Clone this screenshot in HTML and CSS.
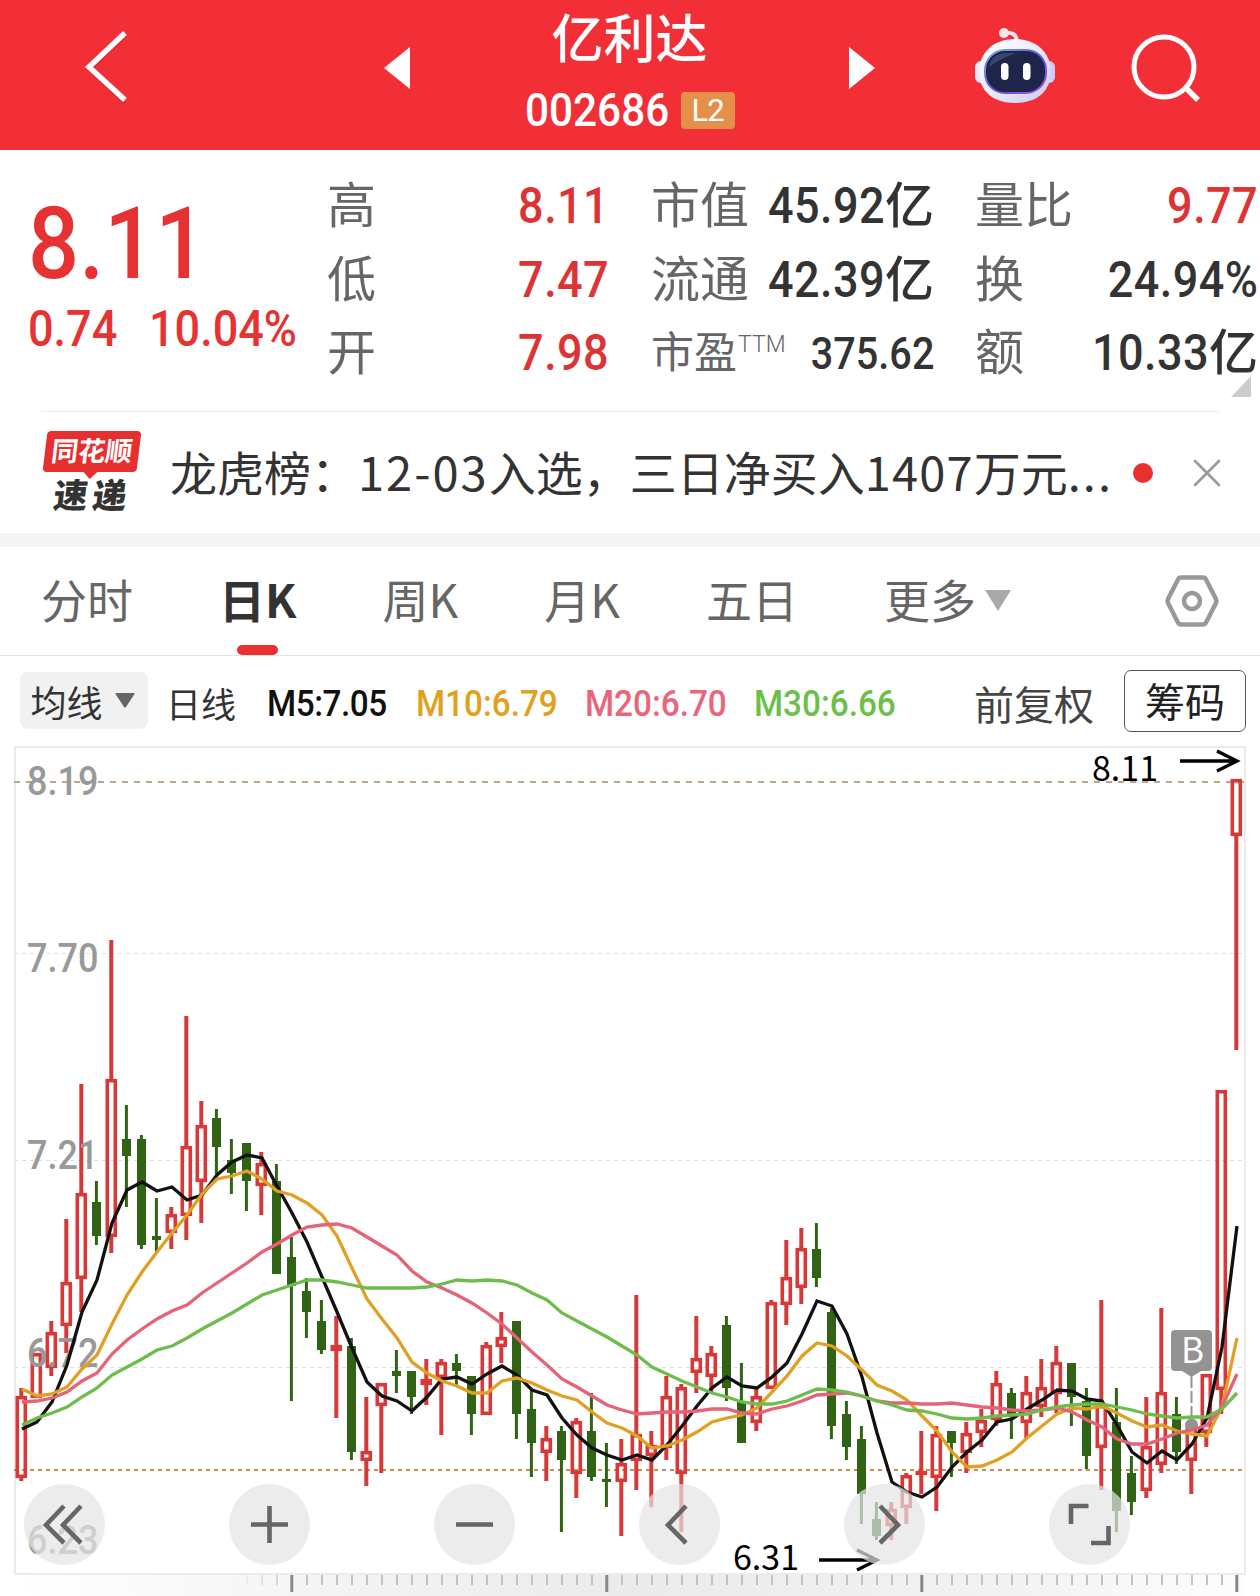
FILE: index.html
```html
<!DOCTYPE html>
<html lang="zh-CN">
<head>
  <meta charset="UTF-8" />
  <meta name="viewport" content="width=device-width, initial-scale=1.0"/>
  <title>亿利达 002686</title>
  <link rel="stylesheet" href="styles.css">
</head>
<body>
  <header class="header">
    <svg class="back" width="50" height="80" viewBox="0 0 50 80">
      <path d="M43 9 L8 43 L43 76" fill="none" stroke="#b5252b" stroke-width="5" opacity="0.5"/>
      <path d="M43 7 L7 41 L43 74" fill="none" stroke="#fff" stroke-width="5.5"/>
    </svg>
    <svg class="prev" width="26" height="42" viewBox="0 0 26 42"><path d="M26 0 V42 L0 21 Z" fill="#fff"/></svg>
    <div class="title">
      <div class="stock-name">亿利达</div>
      <div class="stock-code"><span class="code">002686</span><span class="level">L2</span></div>
    </div>
    <svg class="next" width="26" height="42" viewBox="0 0 26 42"><path d="M0 0 L26 21 L0 42 Z" fill="#fff"/></svg>
    <svg class="robot" width="84" height="78" viewBox="0 0 84 78">
      <defs>
        <linearGradient id="shell" x1="0" y1="0" x2="1" y2="1">
          <stop offset="0" stop-color="#fff"/><stop offset="0.5" stop-color="#ecebfb"/><stop offset="1" stop-color="#c9c8ef"/>
        </linearGradient>
        <linearGradient id="rim" x1="0" y1="0" x2="1" y2="1">
          <stop offset="0" stop-color="#7fb5e8"/><stop offset="0.5" stop-color="#5a55d8"/><stop offset="1" stop-color="#a050e0"/>
        </linearGradient>
      </defs>
      <path d="M31 6 Q43 4 44 14" fill="none" stroke="#e9dff2" stroke-width="4"/>
      <circle cx="31" cy="6" r="5" fill="#f3e6f2"/>
      <rect x="2" y="34" width="12" height="22" rx="6" fill="#e6e6fb"/>
      <rect x="70" y="34" width="12" height="22" rx="6" fill="#cfcdf3"/>
      <path d="M42 12 C62 12 77 24 78 44 C78 64 64 76 42 76 C20 76 6 64 6 44 C7 24 22 12 42 12 Z" fill="url(#shell)"/>
      <rect x="12" y="23" width="61" height="43" rx="20" fill="#1d2648" stroke="url(#rim)" stroke-width="2"/>
      <path d="M16 40 Q18 27 32 26 L44 26 Q30 30 16 40 Z" fill="#47527a" opacity="0.7"/>
      <rect x="28" y="36" width="7.500" height="17" rx="3.700" fill="#fff"/>
      <rect x="50" y="36" width="7.500" height="17" rx="3.700" fill="#fff"/>
    </svg>
    <svg class="search" width="72" height="72" viewBox="0 0 72 72">
      <circle cx="34" cy="35" r="30" fill="none" stroke="#fff" stroke-width="5"/>
      <path d="M56 56 L68 68" stroke="#fff" stroke-width="5.500"/>
    </svg>
  </header>

  <section class="quote">
    <div class="price">
      <div class="last">8.11</div>
      <div class="change"><span>0.74</span><span>10.04%</span></div>
    </div>
    <dl class="stats stats-range">
      <div><dt>高</dt><dd class="up"><span>8.11</span></dd></div>
      <div><dt>低</dt><dd class="up"><span>7.47</span></dd></div>
      <div><dt>开</dt><dd class="up"><span>7.98</span></dd></div>
    </dl>
    <dl class="stats stats-value">
      <div><dt>市值</dt><dd><span>45.92</span><b>亿</b></dd></div>
      <div><dt>流通</dt><dd><span>42.39</span><b>亿</b></dd></div>
      <div class="pe"><dt>市盈<sup>TTM</sup></dt><dd><span>375.62</span></dd></div>
    </dl>
    <dl class="stats stats-volume">
      <div><dt>量比</dt><dd class="up"><span>9.77</span></dd></div>
      <div><dt>换</dt><dd><span>24.94%</span></dd></div>
      <div><dt>额</dt><dd><span>10.33</span><b>亿</b></dd></div>
    </dl>
    <i class="expand"></i>
  </section>

  <section class="notice">
    <div class="logo">
      <div class="logo-top">同花顺</div>
      <div class="logo-bottom">速递</div>
    </div>
    <p class="notice-text">龙虎榜：<span class="date">12-03</span>入选，三日净买入<span class="amount">1407</span>万元<span class="dots">...</span></p>
    <i class="dot"></i>
    <svg class="close" width="28" height="28" viewBox="0 0 28 28"><path d="M2 2 L26 26 M26 2 L2 26" stroke="#999" stroke-width="2.600" stroke-linecap="round"/></svg>
  </section>

  <nav class="tabs">
    <a class="tab">分时</a>
    <a class="tab active">日K</a>
    <a class="tab">周K</a>
    <a class="tab">月K</a>
    <a class="tab">五日</a>
    <a class="tab more">更多<svg width="26" height="21" viewBox="0 0 26 21"><path d="M0 0 H26 L13 21 Z" fill="#a9a9a9"/></svg></a>
    <svg class="setting" width="56" height="54" viewBox="0 0 56 54">
      <path d="M17 3.500 H39 Q41 3.500 42 5.500 L52 25 Q53 27 52 29 L42 48.500 Q41 50.500 39 50.500 H17 Q15 50.500 14 48.500 L4 29 Q3 27 4 25 L14 5.500 Q15 3.500 17 3.500 Z" fill="none" stroke="#999" stroke-width="4.500"/>
      <circle cx="28" cy="27" r="8" fill="none" stroke="#999" stroke-width="4.500"/>
    </svg>
  </nav>

  <div class="toolbar">
    <button class="ma-select">均线<svg width="20" height="15" viewBox="0 0 20 15"><path d="M1 0 H19 Q20 0 19.500 1 L11 14 Q10 15 9 14 L0.500 1 Q0 0 1 0 Z" fill="#666"/></svg></button>
    <span class="period">日线</span>
    <span class="ma ma5">M5:7.05</span>
    <span class="ma ma10">M10:6.79</span>
    <span class="ma ma20">M20:6.70</span>
    <span class="ma ma30">M30:6.66</span>
    <span class="adjust">前复权</span>
    <button class="chips">筹码</button>
  </div>

  <main class="chart-wrap">
    <svg id="chart" width="1260" height="864" viewBox="0 732 1260 864">
      <defs>
        <linearGradient id="ruler" x1="0" y1="0" x2="1" y2="0">
          <stop offset="0" stop-color="#fff"/><stop offset="0.250" stop-color="#f4f4f4"/><stop offset="0.500" stop-color="#ebebeb"/><stop offset="0.800" stop-color="#f2f2f2"/><stop offset="1" stop-color="#fdfdfd"/>
        </linearGradient>
      </defs>
      <rect x="15" y="1574" width="1231" height="22" fill="url(#ruler)"/>
      <rect x="15" y="747" width="1230" height="827" fill="none" stroke="#ebebeb" stroke-width="2"/>
      <g stroke="#dedede" stroke-dasharray="4 4">
        <path d="M14 953.500 H1243 M14 1160.500 H1243 M14 1367.500 H1243"/>
      </g>
      <path d="M14 782 H1244" stroke="#b9a98a" stroke-width="2" stroke-dasharray="6 6"/>
      <path d="M14 1470 H1243" stroke="#c68e50" stroke-width="2" stroke-dasharray="4 4"/>
      <g id="ticks"></g>
      <g id="candles"></g>
      <g class="axis" transform="translate(27 0) scale(0.9 1)">
        <text y="795">8.19</text>
        <text y="972.500">7.70</text>
        <text y="1169.500">7.21</text>
        <text y="1367.500">6.72</text>
        <text y="1554.500">6.23</text>
      </g>
      <g>
        <path d="M1191.500 1376 V1420" stroke="#939393" stroke-width="2" stroke-dasharray="12 3"/>
        <circle cx="1191.500" cy="1425" r="6.500" fill="#939393"/>
        <path d="M1175 1330 H1208 Q1212 1330 1212 1334 V1367 Q1212 1371 1208 1371 H1201 L1191.500 1377 L1182 1371 H1175 Q1171 1371 1171 1367 V1334 Q1171 1330 1175 1330 Z" fill="#939393"/>
        <text class="flag" x="1192.500" y="1362.500" text-anchor="middle">B</text>
      </g>
      <g id="lines"></g>
      <g class="mark">
        <text x="1092" y="781">8.11</text>
        <path d="M1180 761 H1236 M1217 751 L1237 761 L1217 771"/>
        <text x="733" y="1570">6.31</text>
        <path d="M819 1560 H876 M857 1550 L877 1560 L857 1570"/>
      </g>
    </svg>
    <div class="controls">
      <button><svg viewBox="0 0 81 81"><path d="M40 22 L22 41 L40 59 M57 22 L39 41 L57 59"/></svg></button>
      <button><svg viewBox="0 0 81 81"><path d="M22 40.500 H59 M40.500 22 V59"/></svg></button>
      <button><svg viewBox="0 0 81 81"><path d="M22 40.500 H59"/></svg></button>
      <button><svg viewBox="0 0 81 81"><path d="M47 22 L29 41 L47 59"/></svg></button>
      <button><svg viewBox="0 0 81 81"><path d="M36 22 L54 41 L36 59"/></svg></button>
      <button><svg viewBox="0 0 81 81"><path d="M39.500 22 H22 V40 M42 59 H59.500 V42"/></svg></button>
    </div>
  </main>

  <script src="chart.js"></script>
</body>
</html>
```

FILE: styles.css
```css
* {
  box-sizing: border-box;
}

body {
  margin: 0;
  width: 1260px;
  height: 1596px;
  overflow: hidden;
  background: #fff;
  color: #333;
  font-family: Roboto, "Noto Sans CJK SC", sans-serif;
}

button {
  border: none;
  padding: 0;
  font-family: inherit;
}

p, dl, dt, dd {
  margin: 0;
}

.header {
  display: flex;
  align-items: flex-start;
  height: 150px;
  background: #f22f37;
  color: #fff;
}

.back {
  margin: 26px 0 0 82px;
}

.prev {
  margin: 47px 0 0 252px;
}

.title {
  width: 439px;
  display: flex;
  flex-direction: column;
  align-items: center;
}

.stock-name {
  height: 76px;
  padding-top: 4px;
  line-height: 74px;
  font-size: 52px;
  font-weight: 500;
}

.stock-code {
  display: flex;
  align-items: center;
  height: 68px;
}

/* narrow digits: Roboto squeezed horizontally */
.code,
.last,
.change span,
.stats dd span,
.ma {
  display: inline-block;
  transform: scaleX(0.9);
  transform-origin: left center;
}

.code {
  width: 142px;
  font-size: 47px;
  font-weight: 500;
  line-height: 68px;
}

.level {
  margin: 0 0 0 14px;
  width: 54px;
  height: 37px;
  border-radius: 4px;
  background: #e58f4b;
  font-size: 31px;
  line-height: 38px;
  letter-spacing: -1px;
  text-align: center;
}

.next {
  margin: 47px 0 0;
}

.robot {
  margin: 27px 0 0 98px;
}

.search {
  margin: 32px 0 0 73px;
}

.quote {
  position: relative;
  display: flex;
  height: 261px;
  padding-top: 20px;
}

.price {
  width: 327px;
  padding-left: 28px;
  color: #e63232;
  font-weight: 500;
}

.last {
  margin-top: 18px;
  height: 112px;
  font-size: 100px;
  line-height: 112px;
}

.change {
  display: flex;
  margin-top: -1px;
  font-size: 50px;
  line-height: 60px;
}

.change span:first-child {
  width: 121px;
}

.stats > div {
  display: flex;
  justify-content: space-between;
  height: 73.500px;
  line-height: 73.500px;
  white-space: nowrap;
}

.stats dt {
  font-size: 49px;
  font-weight: 400;
  color: #666;
}

.stats dd {
  font-size: 50px;
  font-weight: 500;
}

.stats dd span {
  letter-spacing: 0.500px;
  transform-origin: right center;
}

.stats b {
  font-size: 49px;
  font-weight: 500;
}

.stats .up {
  color: #dc3434;
}

.stats-range {
  width: 282px;
}

.stats-value {
  width: 283px;
  margin-left: 42px;
}

.stats-volume {
  width: 283px;
  margin-left: 41px;
}

.stats .pe dt {
  font-size: 43px;
}

.stats .pe dd {
  font-size: 45px;
}

.stats .pe dd span {
  letter-spacing: 0;
  transform: scaleX(0.88);
}

.pe sup {
  margin-left: 1px;
  font-size: 23px;
  font-weight: 300;
  vertical-align: 16px;
  line-height: 0;
}

.expand {
  position: absolute;
  right: 9px;
  bottom: 14px;
  border-left: 20px solid transparent;
  border-bottom: 21px solid #ccc;
}

.notice {
  display: flex;
  align-items: center;
  height: 122px;
  margin: 0 41px;
  border-top: 1px solid #ebebeb;
}

.logo {
  width: 100px;
  height: 86px;
}

.logo-top {
  position: relative;
  width: 94px;
  height: 41px;
  margin: 1px 0 0 4px;
  border-radius: 4px;
  background: #e63030;
  transform: skewX(-7deg);
  color: #fff;
  font-size: 27px;
  font-weight: 700;
  line-height: 42px;
  text-align: center;
}

.logo-top::after {
  content: "";
  position: absolute;
  left: 41px;
  top: 41px;
  border: 7px solid transparent;
  border-top-color: #e63030;
  border-bottom: none;
}

.logo-bottom {
  margin-left: 13px;
  height: 44px;
  font-size: 34px;
  font-weight: 900;
  line-height: 48px;
  letter-spacing: 5px;
  transform: skewX(-7deg);
}

.notice-text {
  flex: 1;
  margin-left: 29px;
  padding-bottom: 4px;
  font-family: "Noto Sans CJK SC", sans-serif;
  font-size: 47px;
  line-height: 70px;
  white-space: nowrap;
}

.date {
  letter-spacing: 2px;
}

.amount {
  letter-spacing: 1.200px;
}

.dots {
  letter-spacing: 2px;
}

.dot {
  width: 20px;
  height: 20px;
  margin-right: 40px;
  border-radius: 50%;
  background: #e93030;
}

.close {
  margin-right: -2px;
}

.tabs {
  display: flex;
  align-items: flex-start;
  height: 123px;
  padding-left: 41px;
  border-top: 14px solid #f4f4f4;
  border-bottom: 1px solid #e3e3e3;
}

.tab {
  font-family: "Noto Sans CJK SC", sans-serif;
  font-size: 46px;
  font-weight: 400;
  line-height: 103px;
  color: #666;
  margin-right: 86px;
}

.tab.active {
  position: relative;
  color: #333;
  font-weight: 700;
}

.tab.active::after {
  content: "";
  position: absolute;
  left: 18px;
  bottom: -5px;
  width: 41px;
  height: 10px;
  border-radius: 5px;
  background: #e93030;
}

.more {
  display: flex;
  align-items: center;
  gap: 9px;
  margin-right: 0;
}

.more svg {
  margin-top: 4px;
}

.setting {
  margin: 0 40px 0 auto;
  align-self: center;
}

.toolbar {
  display: flex;
  align-items: center;
  height: 76px;
  padding: 13px 14px 0 20px;
}

.ma-select {
  display: flex;
  align-items: center;
  justify-content: center;
  gap: 12px;
  width: 128px;
  height: 57px;
  padding-right: 3px;
  border-radius: 8px;
  background: #f1f1f1;
  color: #333;
  font-size: 36px;
}

.period {
  width: 101px;
  margin: 3px 0 0 18px;
  font-size: 35px;
}

.ma {
  width: 169px;
  margin-top: 5px;
  font-size: 37px;
  font-weight: 500;
  white-space: nowrap;
}

.ma5 {
  width: 149px;
  color: #111;
  letter-spacing: -0.500px;
}

.ma10 {
  color: #e0a020;
}

.ma20 {
  color: #e8657a;
}

.ma30 {
  color: #6cbf4b;
}

.adjust {
  margin: 5px 30px 0 auto;
  font-size: 40px;
  color: #444;
  white-space: nowrap;
}

.toolbar .chips {
  width: 122px;
  height: 62px;
  padding-bottom: 2px;
  border: 1px solid #555;
  border-radius: 7px;
  background: #fff;
  color: #222;
  font-size: 40px;
}

.chart-wrap {
  position: relative;
  height: 864px;
}

#chart {
  display: block;
}

.axis {
  fill: #999;
  font-size: 40px;
  font-weight: 500;
}

.flag {
  fill: #fff;
  font-family: "Noto Sans CJK SC", sans-serif;
  font-size: 35px;
}

.mark text {
  font-family: "Noto Sans CJK SC", sans-serif;
  font-size: 34px;
  fill: #000;
}

.mark path {
  fill: none;
  stroke: #000;
  stroke-width: 3.300;
}

/* floating buttons over the chart */
.controls {
  position: absolute;
  left: 24px;
  bottom: 31px;
  display: flex;
  gap: 124px;
}

.controls button {
  width: 81px;
  height: 81px;
  border-radius: 50%;
  background: rgba(228, 228, 228, 0.7);
}

.controls svg {
  display: block;
  width: 81px;
  height: 81px;
  fill: none;
  stroke: #666;
  stroke-width: 4.600;
}
```

FILE: chart.js
```js
const NS = 'http://www.w3.org/2000/svg';
const STEP = 15;
const X0 = 21.3;

// [dir, high, bodyTop, bodyBottom, low] in chart coordinates, dir 1 = up
const candles = [
  [1,1388,1396,1478,1481],[1,1353,1353,1398,1398],[1,1321,1332,1368,1376],[1,1219,1282,1326,1353],[1,1084,1193,1279,1312],
  [0,1181,1202,1236,1245],[1,940,1079,1237,1253],[0,1105,1139,1156,1207],[0,1135,1139,1245,1249],[0,1198,1236,1240,1252],
  [1,1207,1214,1233,1249],[1,1016,1146,1216,1240],[1,1101,1125,1182,1223],[0,1109,1118,1147,1174],[0,1139,1160,1173,1194],
  [0,1143,1143,1181,1211],[1,1152,1163,1186,1215],[0,1164,1181,1274,1274],[0,1237,1257,1286,1401],[0,1278,1291,1312,1338],
  [0,1300,1321,1350,1354],[1,1316,1345,1351,1418],[0,1338,1346,1452,1460],[1,1397,1451,1461,1486],[1,1383,1383,1406,1473],
  [0,1350,1371,1376,1393],[0,1371,1371,1397,1414],[1,1359,1379,1385,1405],[1,1359,1362,1378,1435],[0,1354,1363,1371,1387],
  [0,1376,1376,1414,1435],[1,1342,1345,1415,1415],[1,1312,1337,1347,1363],[0,1321,1321,1414,1439],[0,1390,1409,1443,1477],
  [1,1426,1438,1453,1481],[0,1426,1431,1460,1532],[1,1418,1421,1474,1498],[0,1393,1431,1477,1481],[0,1443,1479,1482,1507],
  [1,1439,1463,1482,1536],[1,1295,1434,1461,1490],[1,1431,1445,1456,1507],[1,1376,1396,1448,1460],[1,1384,1387,1474,1532],
  [1,1316,1358,1373,1393],[1,1346,1353,1377,1392],[0,1316,1325,1388,1401],[0,1363,1402,1443,1443],[1,1387,1396,1423,1431],
  [1,1300,1302,1389,1389],[1,1240,1277,1305,1325],[1,1228,1248,1288,1304],[0,1223,1249,1278,1287],[0,1308,1312,1426,1439],
  [0,1401,1414,1447,1460],[0,1426,1439,1494,1524],[0,1502,1519,1536,1540],[1,1502,1509,1526,1540],[1,1473,1475,1508,1524],
  [1,1431,1471,1475,1494],[1,1426,1434,1478,1511],[0,1431,1431,1443,1477],[1,1422,1433,1453,1473],[1,1409,1420,1433,1447],
  [1,1371,1383,1420,1426],[0,1388,1393,1417,1439],[1,1376,1392,1423,1438],[1,1359,1387,1407,1417],[1,1346,1362,1394,1413],
  [0,1363,1363,1397,1426],[0,1388,1401,1456,1469],[1,1300,1405,1448,1490],[0,1388,1422,1511,1532],[0,1456,1473,1502,1515],
  [1,1397,1446,1491,1498],[1,1308,1392,1465,1473],[0,1397,1414,1452,1464],[1,1425,1426,1461,1494],[1,1374,1374,1433,1447],
  [1,1090,1090,1390,1414],[1,779,779,836,1050]
];

const averages = [
  { color: '#111', data: [1429,1422,1402,1365,1312,1280,1223,1190,1182,1191,1187,1200,1195,1175,1162,1155,1158,1186,1213,1242,1277,1312,1348,1382,1396,1401,1411,1397,1379,1377,1384,1374,1366,1375,1390,1395,1418,1435,1448,1455,1460,1455,1460,1445,1426,1406,1388,1377,1386,1388,1377,1363,1334,1301,1306,1334,1377,1433,1482,1492,1497,1487,1467,1452,1440,1422,1419,1409,1400,1390,1391,1399,1401,1425,1452,1463,1451,1460,1444,1418,1347,1226] },
  { color: '#dfa024', data: [1389,1396,1394,1387,1369,1355,1324,1295,1272,1252,1233,1215,1194,1179,1176,1171,1179,1191,1195,1203,1215,1236,1268,1299,1319,1338,1362,1373,1381,1386,1393,1393,1381,1378,1383,1390,1396,1400,1412,1423,1428,1436,1448,1446,1440,1432,1422,1418,1415,1408,1392,1376,1356,1343,1346,1356,1370,1385,1391,1400,1416,1431,1452,1467,1466,1460,1452,1438,1426,1414,1408,1409,1406,1413,1421,1427,1425,1431,1434,1436,1407,1338] },
  { color: '#e66377', data: [1402,1401,1398,1392,1381,1373,1354,1340,1329,1319,1311,1305,1293,1283,1273,1263,1252,1244,1235,1227,1225,1224,1228,1237,1246,1255,1271,1282,1288,1295,1303,1313,1324,1338,1352,1365,1379,1387,1396,1405,1410,1414,1413,1412,1412,1411,1409,1409,1413,1414,1409,1406,1401,1395,1394,1393,1396,1401,1403,1403,1404,1404,1403,1405,1407,1408,1410,1411,1410,1408,1412,1420,1427,1439,1444,1444,1439,1433,1430,1425,1407,1374] },
  { color: '#6dbc4c', data: [1425,1418,1413,1407,1397,1388,1375,1367,1359,1350,1346,1338,1329,1321,1313,1304,1295,1290,1285,1280,1280,1282,1285,1288,1288,1288,1288,1287,1284,1280,1281,1280,1281,1285,1293,1300,1313,1321,1329,1337,1346,1355,1367,1374,1381,1387,1393,1397,1402,1404,1404,1401,1395,1389,1390,1392,1396,1401,1405,1410,1411,1414,1418,1419,1418,1416,1415,1414,1410,1407,1405,1404,1404,1407,1410,1414,1416,1418,1417,1417,1409,1393] }
];

function add(parent, name, attrs) {
  const el = document.createElementNS(NS, name);
  for (const key in attrs) el.setAttribute(key, attrs[key]);
  document.getElementById(parent).appendChild(el);
}

candles.forEach(([up, high, top, bottom, low], i) => {
  const x = X0 + i * STEP;
  if (up) {
    if (high < top) add('candles', 'rect', { x: x - 2, y: high, width: 4, height: top - high, fill: '#d43a38' });
    if (low > bottom) add('candles', 'rect', { x: x - 2, y: bottom, width: 4, height: low - bottom, fill: '#d43a38' });
    // outline, inset by half of the stroke
    add('candles', 'rect', { x: x - 4, y: top + 1.7, width: 8, height: Math.max(bottom - top - 3.4, 0.5), fill: 'none', stroke: '#d83838', 'stroke-width': 3.6 });
  } else {
    add('candles', 'rect', { x: x - 1.4, y: high, width: 3, height: low - high, fill: '#316314' });
    add('candles', 'rect', { x: x - 4.3, y: top, width: 9, height: bottom - top, fill: '#316314' });
  }
});

averages.forEach(({ color, data }) => {
  const points = data.map((y, i) => (22 + i * STEP) + ',' + y).join(' ');
  add('lines', 'polyline', { points, fill: 'none', stroke: color, 'stroke-width': 3.3 });
});

for (let i = 15; i < 82; i++) {
  const major = (i - 18) % 21 === 0;
  add('ticks', 'rect', {
    x: X0 + i * STEP - (major ? 1 : 0.3), y: 1575, width: major ? 3 : 2, height: major ? 17 : 10,
    fill: major ? '#888' : '#c2c2c2', opacity: major ? 1 : Math.min(1, (i - 14) / 5)
  });
}
```
